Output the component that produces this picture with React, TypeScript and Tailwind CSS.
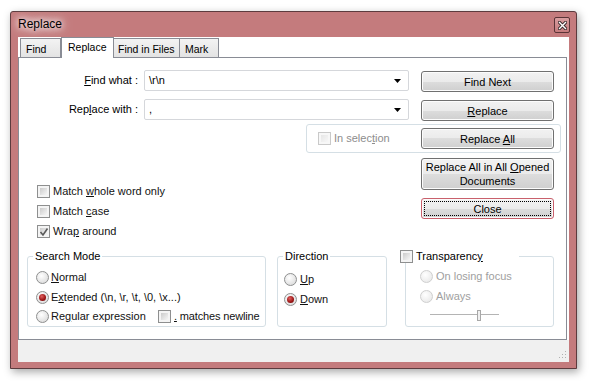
import React from "react";

const FONT = "font-['Liberation_Sans',Arial,sans-serif]";

function U({ children }: { children: React.ReactNode }) {
  return <span className="underline underline-offset-[1px] decoration-[1px]">{children}</span>;
}

function CheckBox({ checked = false, disabled = false }: { checked?: boolean; disabled?: boolean }) {
  return (
    <div
      className={`relative w-[13px] h-[13px] shrink-0 border p-[2px] ${
        disabled ? "border-[#c9c9c9] bg-[#f7f7f7]" : "border-[#8e8f8f] bg-[#f4f4f4]"
      }`}
    >
      <div
        className={`w-full h-full bg-gradient-to-br ${
          disabled ? "from-[#e6e6e6] to-[#f7f7f7]" : "from-[#cbcbcb] to-[#f6f6f6]"
        }`}
      />
      {checked && (
        <svg className="absolute left-[1px] top-[1px]" width="10" height="10" viewBox="0 0 10 10">
          <path d="M1.5 5 L4 8 L8.5 1.5" fill="none" stroke="#5a5a5a" strokeWidth="1.6" />
        </svg>
      )}
    </div>
  );
}

function Radio({ checked = false, disabled = false }: { checked?: boolean; disabled?: boolean }) {
  return (
    <div
      className={`w-[13px] h-[13px] shrink-0 rounded-full border flex items-center justify-center ${
        disabled
          ? "border-[#cfcfcf] bg-[radial-gradient(circle_at_40%_35%,#ffffff,#e4e4e4)]"
          : "border-[#8e8f8f] bg-[radial-gradient(circle_at_40%_35%,#ffffff,#d4d4d4)]"
      }`}
    >
      {checked && (
        <div className="w-[7px] h-[7px] rounded-full bg-[radial-gradient(circle_at_40%_35%,#e06060,#9a1414_60%,#5e0808)]" />
      )}
    </div>
  );
}

function Btn({
  children,
  className = "",
  focused = false,
}: {
  children: React.ReactNode;
  className?: string;
  focused?: boolean;
}) {
  return (
    <div
      className={`w-[133px] shrink-0 rounded-[3px] border flex items-center justify-center text-center leading-[14px] text-black bg-[linear-gradient(#f2f2f2_0%,#ebebeb_50%,#dddddd_50%,#cfcfcf_100%)] shadow-[inset_0_0_0_1px_#fcfcfc] ${
        focused ? "border-[#c9606c] p-[3px]" : "border-[#707070]"
      } ${className}`}
    >
      {focused ? (
        <div className="w-full h-full flex items-center justify-center outline outline-1 outline-dotted outline-black">
          {children}
        </div>
      ) : (
        children
      )}
    </div>
  );
}

function Combo({ value }: { value: string }) {
  return (
    <div className="w-[265px] h-[21px] shrink-0 rounded-[2px] border border-[#d5d7db] bg-white flex items-center pl-[4px] pr-[7px]">
      <span className="flex-1 text-black">{value}</span>
      <svg width="7" height="4" viewBox="0 0 7 4">
        <path d="M0 0 H7 L3.5 4 Z" fill="#000" />
      </svg>
    </div>
  );
}

export default function App() {
  return (
    <div className={`w-[593px] h-[381px] bg-white pt-[11px] pl-[10px] text-[11px] leading-[13px] ${FONT}`}>
      {/* Window */}
      <div className="w-[567px] h-[358px] flex flex-col border border-[#5c3b3e] bg-[#c47b7d] rounded-t-[3px] shadow-[2px_3px_9px_rgba(0,0,0,0.35)]">
        {/* Title bar */}
        <div className="h-[25px] flex items-center pl-[7px] pr-[6px]">
          <span className="flex-1 text-[12px] text-black [text-shadow:0_0_6px_#fff,0_0_10px_#fff,0_0_14px_#fff]">
            Replace
          </span>
          <div className="w-[16px] h-[16px] mt-[1px] rounded-[2px] border border-[#5a3437] bg-[linear-gradient(#d99ea0,#c47b7d)] flex items-center justify-center">
            <svg width="9" height="9" viewBox="0 0 9 9">
              <path d="M1.5 1.5 L7.5 7.5 M7.5 1.5 L1.5 7.5" stroke="#3a2a2c" strokeWidth="3.2" strokeLinecap="square" />
              <path d="M1.5 1.5 L7.5 7.5 M7.5 1.5 L1.5 7.5" stroke="#ffffff" strokeWidth="1.4" strokeLinecap="square" />
            </svg>
          </div>
        </div>

        {/* Client */}
        <div className="px-[7px]">
          <div className="w-[551px] h-[325px] bg-white flex flex-col">
            {/* Tabs */}
            <div className="h-[20px] flex items-end pl-[2px] text-black text-[10.5px]">
              <div className="w-[41px] h-[19px] border border-b-0 border-[#898c95] bg-[linear-gradient(#f3f3f3,#e3e3e3)] pl-[5px] pt-[4px]">
                Find
              </div>
              <div className="relative z-10 -mb-px w-[53px] h-[21px] border border-b-0 border-[#898c95] bg-white pl-[6px] pt-[3px]">
                Replace
              </div>
              <div className="w-[66px] h-[19px] border border-b-0 border-l-0 border-[#898c95] bg-[linear-gradient(#f3f3f3,#e3e3e3)] pl-[4px] pt-[4px]">
                Find in Files
              </div>
              <div className="w-[39px] h-[19px] border border-b-0 border-l-0 border-[#898c95] bg-[linear-gradient(#f3f3f3,#e3e3e3)] pl-[5px] pt-[4px]">
                Mark
              </div>
            </div>

            {/* Tab page */}
            <div className="w-[549px] h-[283px] border border-[#898c95] bg-white flex flex-col">
              {/* Find / Replace rows */}
              <div className="pt-[12px] flex flex-col">
                <div className="flex items-start">
                  <div className="w-[119px] h-[21px] flex items-center justify-end text-black">
                    <U>F</U>ind what :
                  </div>
                  <div className="ml-[6px]">
                    <Combo value="\r\n" />
                  </div>
                  <Btn className="ml-[12px] mt-[1px] h-[21px]">Find Next</Btn>
                </div>
                <div className="flex items-start mt-[7px]">
                  <div className="w-[119px] h-[21px] flex items-center justify-end text-black">
                    Rep<U>l</U>ace with :
                  </div>
                  <div className="ml-[6px]">
                    <Combo value="," />
                  </div>
                  <Btn className="ml-[12px] mt-[1px] h-[21px]">
                    <span>
                      <U>R</U>eplace
                    </span>
                  </Btn>
                </div>
                <div className="ml-[287px] mt-[3px] w-[255px] h-[29px] rounded-[3px] border border-[#d5dfe5] flex items-center">
                  <div className="w-[114px] pl-[11px] flex items-center gap-[3px] text-[#8d8d8d]">
                    <CheckBox disabled />
                    <span>
                      In selec<U>t</U>ion
                    </span>
                  </div>
                  <Btn className="h-[21px]">
                    <span>
                      Replace <U>A</U>ll
                    </span>
                  </Btn>
                </div>
              </div>

              {/* Options + buttons */}
              <div className="flex">
                <div className="w-[402px] pt-[28px] pl-[18px] flex flex-col text-[#111]">
                  <div className="h-[20px] flex items-center gap-[3px]">
                    <CheckBox />
                    <span>
                      Match <U>w</U>hole word only
                    </span>
                  </div>
                  <div className="h-[20px] flex items-center gap-[3px]">
                    <CheckBox />
                    <span>
                      Match <U>c</U>ase
                    </span>
                  </div>
                  <div className="h-[20px] flex items-center gap-[3px]">
                    <CheckBox checked />
                    <span>
                      Wra<U>p</U> around
                    </span>
                  </div>
                </div>
                <div className="pt-[5px] flex flex-col gap-[8px]">
                  <Btn className="h-[32px]">
                    <span>
                      Replace All in All <U>O</U>pened
                      <br />
                      Documents
                    </span>
                  </Btn>
                  <Btn className="h-[21px]" focused>
                    Close
                  </Btn>
                </div>
              </div>

              {/* Group boxes */}
              <div className="flex items-start pl-[8px] mt-[9px] text-[#111]">
                <fieldset className="w-[239px] h-[77px] rounded-[3px] border border-[#d5dfe5]">
                  <legend className="ml-[5px] px-[2px] text-black">Search Mode</legend>
                  <div className="pt-[4px] pl-[8px] flex flex-col">
                    <div className="h-[20px] flex items-center gap-[2px]">
                      <Radio />
                      <span>
                        <U>N</U>ormal
                      </span>
                    </div>
                    <div className="h-[20px] flex items-center gap-[2px]">
                      <Radio checked />
                      <span>
                        E<U>x</U>tended (\n, \r, \t, \0, \x...)
                      </span>
                    </div>
                    <div className="h-[19px] flex items-center">
                      <div className="w-[122px] flex items-center gap-[2px]">
                        <Radio />
                        <span>
                          Re<U>g</U>ular expression
                        </span>
                      </div>
                      <div className="flex items-center gap-[3px]">
                        <CheckBox />
                        <span className="tracking-[-0.15px]">
                          <U>.</U> matches newline
                        </span>
                      </div>
                    </div>
                  </div>
                </fieldset>

                <fieldset className="ml-[11px] w-[110px] h-[77px] rounded-[3px] border border-[#d5dfe5]">
                  <legend className="ml-[5px] px-[2px] text-black">Direction</legend>
                  <div className="pt-[6px] pl-[6px] flex flex-col">
                    <div className="h-[20px] flex items-center gap-[3px]">
                      <Radio />
                      <span>
                        <U>U</U>p
                      </span>
                    </div>
                    <div className="h-[20px] flex items-center gap-[3px]">
                      <Radio checked />
                      <span>
                        <U>D</U>own
                      </span>
                    </div>
                  </div>
                </fieldset>

                <fieldset className="ml-[18px] w-[149px] h-[77px] rounded-[3px] border border-[#d5dfe5]">
                  <legend className="ml-[-6px] w-[119px] flex items-center gap-[3px] text-black">
                    <CheckBox />
                    <span>
                      Transparenc<U>y</U>
                    </span>
                  </legend>
                  <div className="pt-[3px] pl-[14px] flex flex-col text-[#a0a0a0]">
                    <div className="h-[20px] flex items-center gap-[3px]">
                      <Radio disabled />
                      <span>On losing focus</span>
                    </div>
                    <div className="h-[20px] flex items-center gap-[3px]">
                      <Radio disabled />
                      <span>Always</span>
                    </div>
                    <div className="h-[18px] pl-[10px] flex items-center">
                      <div className="w-[47px] h-[2px] border-t border-[#b4b4b4] bg-white" />
                      <div className="w-[4px] h-[11px] border border-[#a8a8a8] bg-[#f0f0f0]" />
                      <div className="w-[18px] h-[2px] border-t border-[#b4b4b4] bg-white" />
                    </div>
                  </div>
                </fieldset>
              </div>
            </div>

            {/* Bottom strip */}
            <div className="flex-1 bg-[#f0f0f0] flex items-end justify-end pr-[2px] pb-[3px]">
              <svg width="8" height="8" viewBox="0 0 8 8">
                <rect x="6" y="0" width="1" height="1" fill="#b0b0b0" />
                <rect x="3" y="3" width="1" height="1" fill="#b0b0b0" />
                <rect x="6" y="3" width="1" height="1" fill="#b0b0b0" />
                <rect x="0" y="6" width="1" height="1" fill="#b0b0b0" />
                <rect x="3" y="6" width="1" height="1" fill="#b0b0b0" />
                <rect x="6" y="6" width="1" height="1" fill="#b0b0b0" />
              </svg>
            </div>
          </div>
        </div>
      </div>
    </div>
  );
}
